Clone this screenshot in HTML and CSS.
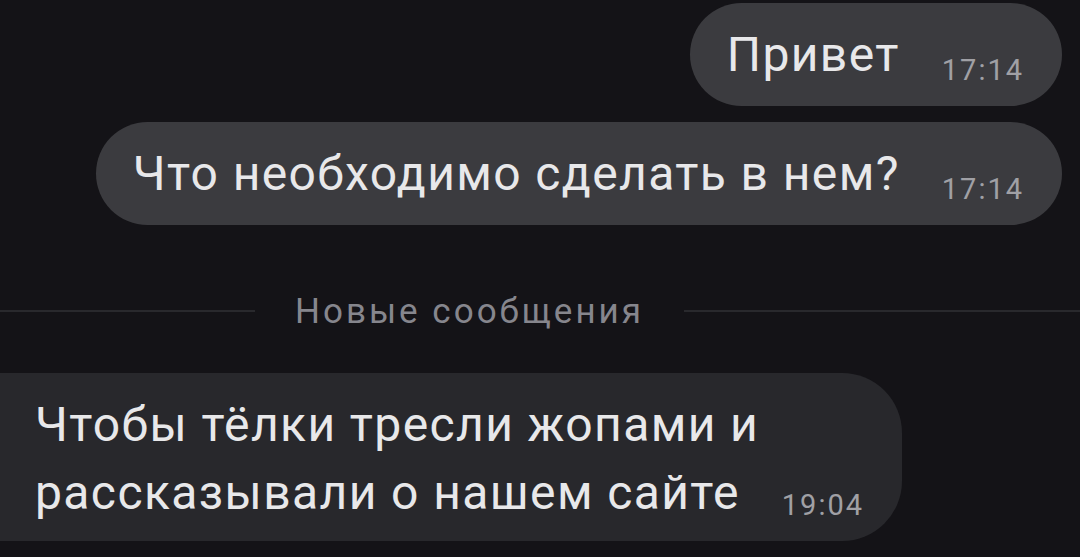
FILE: index.html
```html
<!DOCTYPE html>
<html lang="ru">
<head>
<meta charset="utf-8">
<title>Чат</title>
<link rel="stylesheet" href="styles.css">
</head>
<body>
<main class="chat">
  <div class="row row-out row-first">
    <div class="bubble bubble-out"><span class="text">Привет</span><span class="time">17:14</span></div>
  </div>
  <div class="row row-out">
    <div class="bubble bubble-out"><span class="text">Что необходимо сделать в нем?</span><span class="time">17:14</span></div>
  </div>
  <div class="divider">
    <span class="line line-left"></span>
    <span class="divider-text">Новые сообщения</span>
    <span class="line line-right"></span>
  </div>
  <div class="row row-in">
    <div class="bubble bubble-in"><span class="text">Чтобы тёлки тресли жопами и<br>рассказывали о нашем сайте</span><span class="time time-in">19:04</span></div>
  </div>
</main>
</body>
</html>
```

FILE: styles.css
```css
html, body {
  margin: 0;
  padding: 0;
  background: #141317;
}

body {
  width: 1080px;
  height: 557px;
  overflow: hidden;
  font-family: Roboto, "Liberation Sans", sans-serif;
  color: #e8e8ea;
}

.chat {
  display: flex;
  flex-direction: column;
  padding-top: 3px;
}

.row {
  display: flex;
}

.row-out {
  justify-content: flex-end;
  padding-right: 18px;
}

.row-out + .row-out {
  margin-top: 16px;
}

.row-in {
  justify-content: flex-start;
  margin-top: 42px;
}

.bubble {
  font-size: 48px;
  line-height: 68px;
  letter-spacing: 1.4px;
  padding: 18px 38px 17px 37px;
  border-radius: 52px;
  white-space: nowrap;
}

.bubble-out {
  background: #3b3b3f;
}

.bubble-in {
  background: #28282c;
  border-radius: 0 60px 60px 0;
  padding-left: 35px;
  padding-bottom: 14px;
}

.time {
  display: inline-block;
  margin-left: 42px;
  font-size: 29px;
  line-height: 1;
  letter-spacing: 2px;
  vertical-align: -9px;
  color: #a0a0a5;
}

.time-in {
  vertical-align: -6px;
}

.divider {
  display: flex;
  align-items: center;
  gap: 40px;
  margin-top: 66px;
  height: 40px;
}

.line {
  height: 2px;
  background: #29292d;
}

.line-left {
  flex: 0 0 255px;
}

.line-right {
  flex: 1 1 auto;
}

.divider-text {
  font-size: 35px;
  letter-spacing: 3px;
  color: #86868d;
  white-space: nowrap;
}
```
